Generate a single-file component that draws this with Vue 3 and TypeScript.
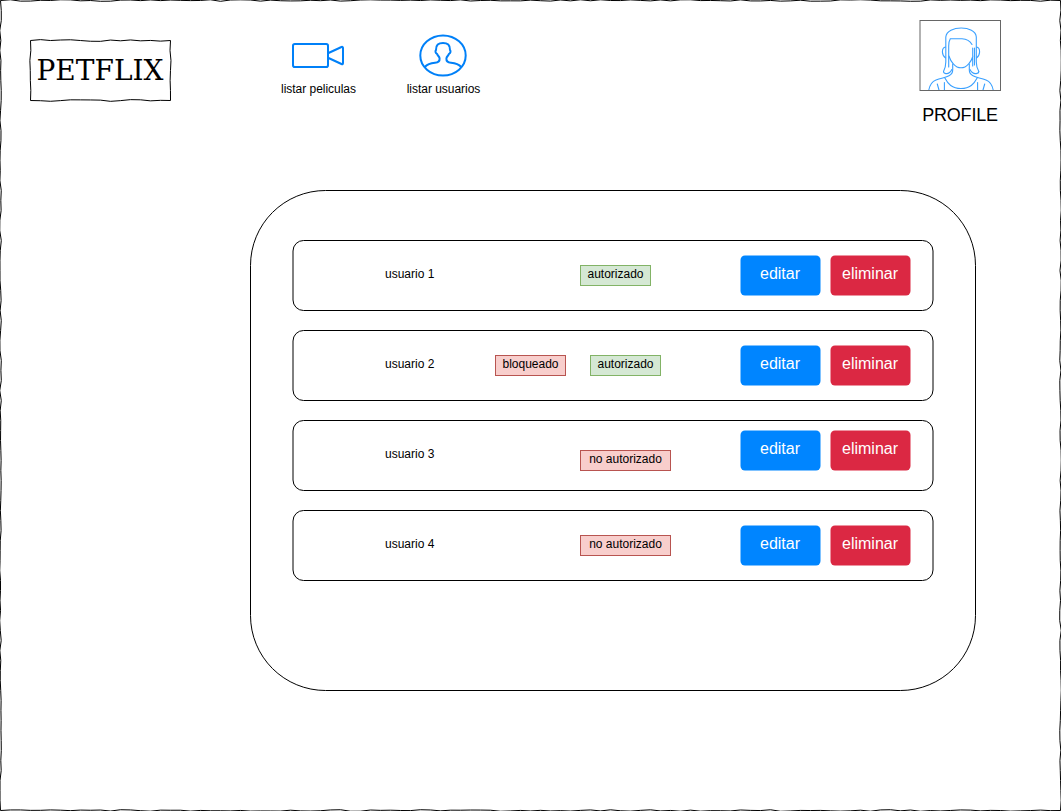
<script setup lang="ts">
interface Tag { text: string; kind: 'ok' | 'bad'; place: string }
interface User { name: string; tags: Tag[]; raised?: boolean }

const users: User[] = [
  { name: 'usuario 1', tags: [{ text: 'autorizado', kind: 'ok', place: 'single' }] },
  {
    name: 'usuario 2',
    tags: [
      { text: 'bloqueado', kind: 'bad', place: 'first' },
      { text: 'autorizado', kind: 'ok', place: 'second' },
    ],
  },
  { name: 'usuario 3', tags: [{ text: 'no autorizado', kind: 'bad', place: 'single wide' }], raised: true },
  { name: 'usuario 4', tags: [{ text: 'no autorizado', kind: 'bad', place: 'single wide' }] },
]

// Hand-drawn rectangle: each side is split into short steps with a small fixed wobble.
function sketchRect(x: number, y: number, w: number, h: number, amp: number, seed: number): string {
  let s = seed
  const rnd = () => {
    s = (s * 16807) % 2147483647
    return (s / 2147483647 - 0.5) * 2 * amp
  }
  const pts: string[] = []
  const side = (x1: number, y1: number, x2: number, y2: number) => {
    const len = Math.hypot(x2 - x1, y2 - y1)
    const n = Math.round(len / 10)
    const nx = -(y2 - y1) / len
    const ny = (x2 - x1) / len
    for (let i = 0; i < n; i++) {
      const d = i === 0 ? 0 : rnd()
      pts.push(`${(x1 + ((x2 - x1) * i) / n + nx * d).toFixed(2)} ${(y1 + ((y2 - y1) * i) / n + ny * d).toFixed(2)}`)
    }
  }
  side(x, y, x + w, y)
  side(x + w, y, x + w, y + h)
  side(x + w, y + h, x, y + h)
  side(x, y + h, x, y)
  return 'M' + pts.join('L') + 'Z'
}

const pageFrame = sketchRect(0.5, 0.5, 1060, 810, 0.8, 4211)
const logoFrame = sketchRect(2.5, 2.5, 140, 60, 0.9, 977)
</script>

<template>
  <div class="page">
    <svg class="frame" width="1061" height="811"><path :d="pageFrame" fill="none" stroke="#000" /></svg>

    <header class="header">
      <div class="logo">
        <svg class="logo-frame" width="146" height="66"><path :d="logoFrame" fill="none" stroke="#000" /></svg>
        <span class="logo-text">PETFLIX</span>
      </div>

      <nav class="nav">
        <a class="nav-item">
          <svg width="56" height="46" viewBox="290 32 56 46" fill="none" stroke="#0080f8" stroke-width="2" stroke-linejoin="round">
            <rect x="293" y="44" width="35" height="23" rx="1.8" />
            <path d="M328.5 53L341.5 47Q343 46.5 343 48V63Q343 64.7 341.5 64L328.5 58" />
          </svg>
          <span>listar peliculas</span>
        </a>
        <a class="nav-item">
          <svg width="56" height="46" viewBox="415 32 56 46" fill="none" stroke="#0080f8" stroke-width="2" stroke-linejoin="round">
            <ellipse cx="443" cy="55.5" rx="22.7" ry="20" />
            <path d="M424.8 67C427.5 64 431 63.2 435 62.8C439 62.4 439.8 61 439.6 58.5C439.5 56.5 437.5 55.8 437 53.8C435.4 53 435 51.2 436 50C435.8 45 438.5 42.9 443 42.9S450.2 45 450 50C451 51.2 450.6 53 449 53.8C448.5 55.8 446.5 56.5 446.4 58.5C446.2 61 447 62.4 451 62.8C455 63.2 458.5 64 461.2 67" />
          </svg>
          <span>listar usuarios</span>
        </a>
      </nav>

      <div class="profile">
        <svg class="avatar" width="82" height="72" viewBox="919 19 82 72" fill="none" stroke="#3aa0ff" stroke-width="1.1" stroke-linecap="round">
          <path d="M928.8 90C930 84 932 81.5 936 80C941 78 946 77.5 949 75.8C952 74.2 952.7 73 952.7 70V64M969.3 64V70C969.3 73 970 74.2 973 75.8C976 77.5 981 78 986 80C990 81.5 992 84 993.2 90" />
          <path d="M948.7 67V46Q948.4 42 950.3 38.7H962Q969 39 972 44.5" />
          <path d="M948.9 56C950.5 61 955 67.8 961 67.8S971.5 61 973 56M972.7 48V66M974.5 48V65" />
          <path d="M943.5 71.5Q945.8 67 945.8 62V37C947 25 975.5 25 976.3 37V62Q976.3 67 978.8 71.5" />
          <path d="M945.6 47Q942.3 47.5 942.4 52Q942.6 56 945.6 58M976.5 47Q979.7 47.5 979.6 52Q979.4 56 976.5 58M943.5 71.5Q943.3 73 945 73.4Q949.5 74.5 951.8 69.5M978.8 71.5Q979 73 977 73.4Q972.5 74.5 970 69.5" />
          <path d="M944.7 77.8C948 84 952 88.5 961 88.5S974 84 977.3 77.8M937.3 84L939 90M944.4 82.5V90M977.6 82.5V90M984.7 84L983 90" />
          <rect x="920" y="20.5" width="80.5" height="70" stroke="#666" stroke-width="1" />
        </svg>
        <span class="profile-label">PROFILE</span>
      </div>
    </header>

    <main class="panel">
      <svg class="outline" width="726" height="501"><rect x=".5" y=".5" width="725" height="500" rx="75" fill="none" stroke="#000" /></svg>
      <div v-for="user in users" :key="user.name" class="row" :class="{ raised: user.raised }">
        <svg class="outline" width="642" height="71"><rect x="1" y=".5" width="640" height="70" rx="10.5" fill="none" stroke="#000" /></svg>
        <span class="name">{{ user.name }}</span>
        <div class="tags">
          <span v-for="tag in user.tags" :key="tag.text" class="tag" :class="[tag.kind, tag.place]">{{ tag.text }}</span>
        </div>
        <div class="actions">
          <button class="btn edit">
            <svg class="outline" width="81" height="41"><rect x=".5" y=".5" width="80" height="40" rx="4.5" fill="#0085ff" /></svg>
            <span>editar</span>
          </button>
          <button class="btn remove">
            <svg class="outline" width="81" height="41"><rect x=".5" y=".5" width="80" height="40" rx="4.5" fill="#db2843" /></svg>
            <span>eliminar</span>
          </button>
        </div>
      </div>
    </main>
  </div>
</template>

<style>
body { margin: 0; background: #fff; }
</style>

<style scoped>
.page {
  position: relative;
  box-sizing: border-box;
  width: 1061px;
  height: 811px;
  overflow: hidden;
  font-family: "Liberation Sans", Arial, sans-serif;
  font-size: 12px;
  line-height: 14px;
  color: #000;
}
svg { display: block; }
.frame, .outline { position: absolute; left: 0; top: 0; }
.header { display: flex; height: 190px; }
.logo {
  position: relative;
  display: flex;
  width: 146px;
  height: 66px;
  margin: 38px 0 0 28px;
}
.logo-frame { position: absolute; left: 0; top: 0; }
.logo-text {
  font: 28px/36px "DejaVu Serif", serif;
  padding: 15px 0 0 8.5px;
  white-space: nowrap;
}
.nav { display: flex; margin: 32px 0 0 78px; }
.nav-item {
  display: flex;
  flex-direction: column;
  align-items: center;
  gap: 4px;
  width: 132px;
  white-space: nowrap;
}
.nav-item span { padding-left: 1px; letter-spacing: -0.03px; }
.nav-item:last-child { width: 118px; }
.profile {
  display: flex;
  flex-direction: column;
  align-items: center;
  width: 82px;
  margin: 19px 0 0 417px;
}
.profile-label { font-size: 18px; line-height: 20px; margin-top: 14px; letter-spacing: -0.2px; }
.panel {
  position: relative;
  box-sizing: border-box;
  display: flex;
  flex-direction: column;
  gap: 19px;
  width: 726px;
  height: 501px;
  margin-left: 250px;
  padding: 50px 0 0 42px;
}
.row {
  position: relative;
  display: flex;
  width: 642px;
  height: 71px;
}
.name { width: 110px; margin: 27px 0 0 93px; position: relative; }
.tags { display: flex; position: relative; width: 245px; margin-top: 25px; }
.tag {
  box-sizing: border-box;
  width: 71px;
  height: 21px;
  border: 1px solid;
  line-height: 17px;
  text-align: center;
  white-space: nowrap;
}
.tag.ok { background: #d5e8d4; border-color: #82b366; }
.tag.bad { background: #f8cecc; border-color: #b85450; }
.single { margin-left: 85px; }
.wide { width: 91px; }
.second { margin-left: 24px; }
.actions { display: flex; gap: 9px; margin-top: 15px; }
.raised .actions { margin-top: 10px; }
.raised .tags { margin-top: 30px; }
.btn {
  position: relative;
  width: 81px;
  height: 41px;
  padding: 0 1px 4px 0;
  border: 0;
  background: none;
  color: #fff;
  font: 16px/18px "Liberation Sans", Arial, sans-serif;
}
.btn span { position: relative; }
</style>
